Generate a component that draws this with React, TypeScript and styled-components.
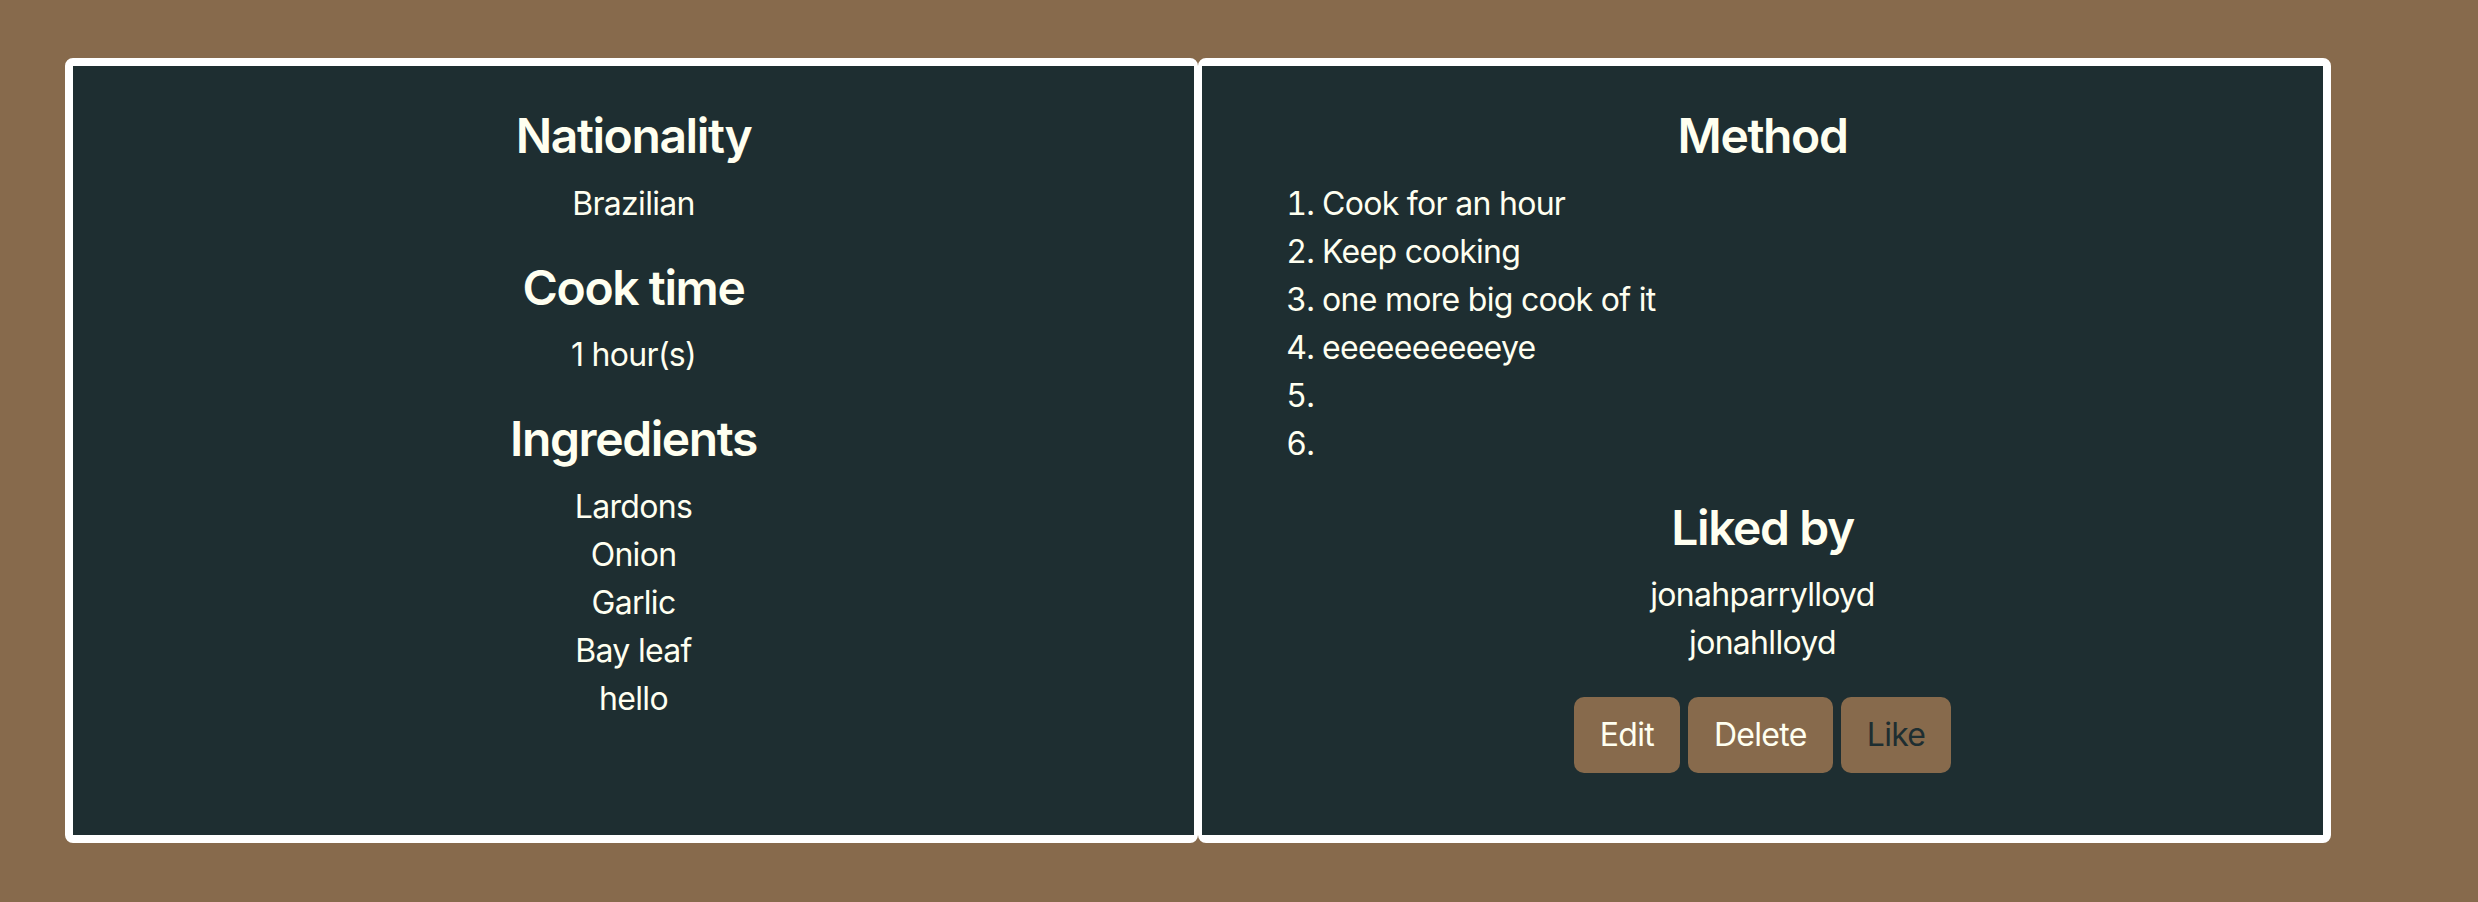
import React from 'react';
import styled, { createGlobalStyle } from 'styled-components';

const GlobalStyle = createGlobalStyle`
  html, body {
    margin: 0;
    padding: 0;
    background-color: #876a4c;
    font-family: Inter, "Noto Sans", "Liberation Sans", sans-serif;
    font-size: 32px;
    line-height: 1.5;
    letter-spacing: -0.7px;
    color: ivory;
  }
  * {
    box-sizing: border-box;
  }
`;

const recipe = {
  nationality: 'Brazilian',
  cookTime: '1 hour(s)',
  ingredients: ['Lardons', 'Onion', 'Garlic', 'Bay leaf', 'hello'],
  method: ['Cook for an hour', 'Keep cooking', 'one more big cook of it', 'eeeeeeeeeeye', '', ''],
  likedBy: ['jonahparrylloyd', 'jonahlloyd'],
};

export default function App() {
  return (
    <>
      <GlobalStyle />
      <Page>
        <RecipeRow>
          <Card side="left">
            <Heading>Nationality</Heading>
            <Para>{recipe.nationality}</Para>
            <Heading>Cook time</Heading>
            <Para>{recipe.cookTime}</Para>
            <Heading>Ingredients</Heading>
            <PlainList>
              {recipe.ingredients.map((item, i) => (
                <li key={i}>{item}</li>
              ))}
            </PlainList>
          </Card>
          <Card side="right">
            <Heading>Method</Heading>
            <MethodList>
              {recipe.method.map((step, i) => (
                <li key={i}>{step || '\u00a0'}</li>
              ))}
            </MethodList>
            <Heading>Liked by</Heading>
            <PlainList>
              {recipe.likedBy.map(name => (
                <li key={name}>{name}</li>
              ))}
            </PlainList>
            <ButtonRow>
              <ActionButton>Edit</ActionButton>
              <ActionButton>Delete</ActionButton>
              <ActionButton dark>Like</ActionButton>
            </ButtonRow>
          </Card>
        </RecipeRow>
      </Page>
    </>
  );
}

const Page = styled.div`
  min-height: 902px;
  padding-top: 58px;
  padding-left: 65px;
`;

const RecipeRow = styled.div`
  display: flex;
  align-items: stretch;
  width: 2266px;
`;

type CardProps = {
  side: 'left' | 'right';
};

const Card = styled.div<CardProps>`
  flex: 1;
  display: flex;
  flex-direction: column;
  background-color: #1e2e31;
  border: 8px solid #fff;
  border-left-width: ${({ side }) => (side === 'right' ? '4px' : '8px')};
  border-right-width: ${({ side }) => (side === 'left' ? '4px' : '8px')};
  border-radius: 8px;
  padding: 41px 40px 62px;
  text-align: center;
`;

const Heading = styled.h4`
  margin: 0 0 15px;
  font-size: 48px;
  font-weight: 600;
  line-height: 1.2;
  letter-spacing: -1.4px;
  color: ivory;
`;

const Para = styled.p`
  margin: 0 0 31px;
`;

const PlainList = styled.ul`
  list-style: none;
  margin: 0;
  padding: 0;
`;

const MethodList = styled.ol`
  margin: 0 0 31px;
  padding: 0 0 0 80px;
  text-align: left;
`;

const ButtonRow = styled.div`
  display: flex;
  justify-content: center;
  gap: 8px;
  margin-top: 30px;
`;

type ActionButtonProps = {
  dark?: boolean;
};

const ActionButton = styled.button<ActionButtonProps>`
  font-family: inherit;
  font-size: 32px;
  line-height: 1.5;
  letter-spacing: -0.7px;
  padding: 12px 24px;
  border: 2px solid transparent;
  border-radius: 10px;
  background-color: #876a4c;
  color: ${({ dark }) => (dark ? '#1e2e31' : 'ivory')};
  cursor: pointer;
`;
